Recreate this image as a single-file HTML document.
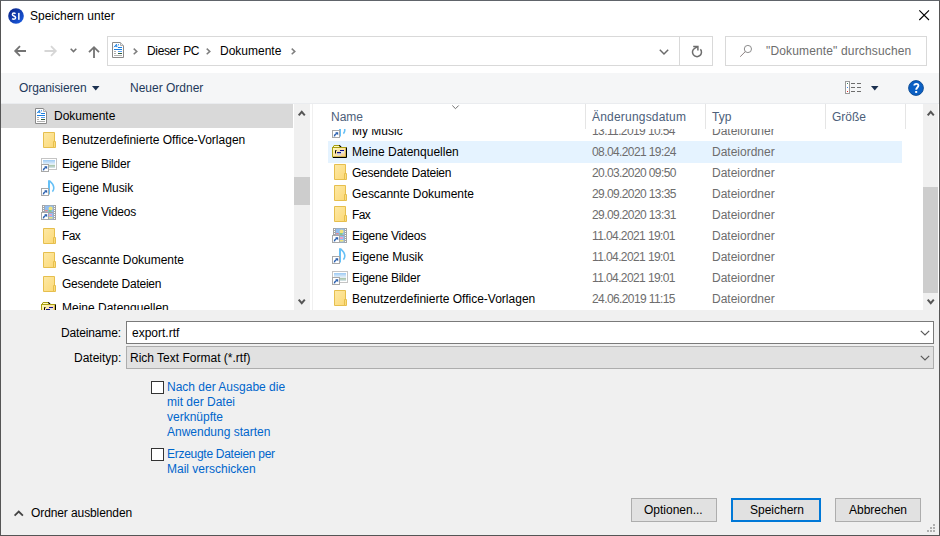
<!DOCTYPE html>
<html><head><meta charset="utf-8">
<style>
*{box-sizing:border-box;margin:0;padding:0}
html,body{width:940px;height:536px;overflow:hidden;background:#fff}
body{position:relative;font-family:"Liberation Sans",sans-serif;font-size:12px;color:#000}
.a{position:absolute}
.t{position:absolute;white-space:nowrap;line-height:14px;height:14px}
svg{position:absolute;overflow:visible}
</style></head><body>
<svg width="0" height="0" style="position:absolute;left:0;top:0"><defs>
<linearGradient id="fg" x1="0" y1="0" x2="1" y2="1"><stop offset="0" stop-color="#fde9a6"/><stop offset="1" stop-color="#fcd977"/></linearGradient>
<symbol id="i-folder" viewBox="0 0 13 16"><path d="M0.5 0.5H11.5V15.5H0.5Z" fill="url(#fg)" stroke="#e6bf4e"/><path d="M10.5 9.5H12.5V15.5H10.5Z" fill="#fcdc7c" stroke="#e6bf4e"/></symbol>
<symbol id="i-sc" viewBox="0 0 8 8"><rect x="0.5" y="0.5" width="7" height="7" fill="#fff" stroke="#a8a8a8"/><path d="M3.2 2.2H6.2V5.2Z" fill="#2a5fae"/><path d="M2.3 6.3Q2.6 4.6 4.8 3.4" stroke="#2a5fae" stroke-width="1.5" fill="none"/></symbol>
<linearGradient id="sky" x1="0" y1="0" x2="0" y2="1"><stop offset="0" stop-color="#9ccaf4"/><stop offset="0.55" stop-color="#e8f2fa"/><stop offset="0.7" stop-color="#a8c4a8"/><stop offset="1" stop-color="#d8e6f0"/></linearGradient>
<symbol id="i-pics" viewBox="0 0 16 16"><rect x="0.5" y="2.5" width="15" height="11" fill="#fff" stroke="#c4c4c4"/><rect x="2" y="4" width="12" height="8" fill="url(#sky)"/><use href="#i-sc" x="0" y="8" width="8" height="8"/></symbol>
<symbol id="i-music" viewBox="0 0 16 16"><path d="M8 0.3V14.5" stroke="#66c0f6" stroke-width="2"/><path d="M8.6 0.8C11 2.8 12.8 5 12.8 8C12.8 9.5 12.2 10.8 11.4 11.6" stroke="#66c0f6" stroke-width="1.6" fill="none"/><use href="#i-sc" x="0" y="8" width="8" height="8"/></symbol>
<symbol id="i-vid" viewBox="0 0 16 16"><rect x="1" y="1" width="14" height="15" fill="#a4a4a4"/><rect x="3.8" y="1.6" width="8.6" height="13.8" fill="#92bef0"/><rect x="3.8" y="8" width="8.6" height="1" fill="#a4a4a4"/><circle cx="9.6" cy="4.6" r="2" fill="#f2e27a"/><rect x="4.2" y="6" width="2.5" height="1.5" fill="#e88a8a"/><rect x="7.5" y="6.2" width="3" height="1.5" fill="#7ac87a"/><rect x="8" y="10" width="3" height="2" fill="#e8a0c8"/><rect x="4.5" y="13" width="7" height="1.6" fill="#f2e27a"/><g fill="#fff"><rect x="2" y="2" width="1" height="1"/><rect x="2" y="4" width="1" height="1"/><rect x="2" y="6" width="1" height="1"/><rect x="13" y="2" width="1" height="1"/><rect x="13" y="4" width="1" height="1"/><rect x="13" y="6" width="1" height="1"/><rect x="13" y="8" width="1" height="1"/><rect x="13" y="10" width="1" height="1"/><rect x="13" y="12" width="1" height="1"/><rect x="13" y="14" width="1" height="1"/></g><use href="#i-sc" x="0" y="8" width="8" height="8"/></symbol>
<linearGradient id="dg" x1="0" y1="0" x2="1" y2="1"><stop offset="0" stop-color="#fffcb8"/><stop offset="1" stop-color="#f8c890"/></linearGradient>
<symbol id="i-data" viewBox="0 0 15 13"><path d="M1 2.5L2 0.5H7.5L9 2.5" fill="#fffac0" stroke="#a89e10"/><path d="M7.3 0.3L9.2 2.4" stroke="#000" stroke-width="1.1"/><rect x="0.5" y="2.5" width="13.5" height="9.5" fill="url(#dg)" stroke="#a89e10"/><path d="M1 12.5H14.5V2.5" stroke="#000" fill="none"/><rect x="8" y="5" width="4" height="3.5" fill="#e4e4e4"/><rect x="8" y="5" width="4" height="1" fill="#10108a"/><rect x="5" y="7" width="4" height="3.5" fill="#d8d8d8"/><rect x="5" y="7" width="4" height="1.2" fill="#10108a"/><path d="M3.5 8.5V5.5H4.5" stroke="#000" fill="none"/></symbol>
<symbol id="i-doc" viewBox="0 0 12 16"><path d="M0.5 0.5H8.5L11.5 3.5V15.5H0.5Z" fill="#fff" stroke="#8a8a8a"/><path d="M8.5 0.5V3.5H11.5" fill="#e8e8e8" stroke="#b0b0b0"/><path d="M2 5.2L4.5 2.2L5 5.2M3 4.2H5" stroke="#1a7fe0" fill="none" stroke-width="0.9"/><path d="M6 2.8H7M6 5.5H10M2 7.5H10" stroke="#1a7fe0"/><path d="M2 9.5H4M2 11.5H4M2 13.5H10" stroke="#b0b0b0"/><path d="M6 9.5H10" stroke="#5ba0f0"/><path d="M6 11.5H10" stroke="#2f5a3a"/></symbol>
</defs></svg>

<!-- window frame -->
<div class="a" style="left:0;top:0;width:940px;height:536px;border:1px solid #555;border-top-color:#60646a"></div>

<!-- title bar -->
<svg style="left:8px;top:8px" width="16" height="16" viewBox="0 0 16 16">
<defs><linearGradient id="gi" x1="0" y1="0" x2="1" y2="1"><stop offset="0" stop-color="#0a1f80"/><stop offset="1" stop-color="#1a60e8"/></linearGradient></defs>
<circle cx="8" cy="8" r="7.8" fill="url(#gi)"/>
<path d="M7.5 5.7C7 5.2 6.5 5.1 5.9 5.1C4.9 5.1 4.4 5.7 4.4 6.4C4.4 8.3 7.6 7.7 7.6 9.8C7.6 10.7 6.9 11.2 5.9 11.2C5.1 11.2 4.5 11 4.1 10.7" stroke="#fff" stroke-width="1.5" fill="none"/><rect x="10.1" y="4.9" width="1.5" height="6.9" fill="#fff"/>
</svg>
<div class="t" style="left:30px;top:9px">Speichern unter</div>
<svg style="left:919px;top:10px" width="11" height="11" viewBox="0 0 11 11"><path d="M0.3 0.3L10 10M10 0.3L0.3 10" stroke="#000" stroke-width="1.1"/></svg>

<!-- nav buttons -->
<svg style="left:14px;top:45px" width="13" height="12" viewBox="0 0 13 12"><path d="M12 6H1.5M6 1.2L1.2 6L6 10.8" stroke="#737373" stroke-width="1.8" fill="none"/></svg>
<svg style="left:44px;top:45px" width="13" height="12" viewBox="0 0 13 12"><path d="M0.5 6H11.5M7 1.2L11.8 6L7 10.8" stroke="#d6d6d6" stroke-width="1.8" fill="none"/></svg>
<svg style="left:70px;top:48px" width="8" height="5" viewBox="0 0 8 5"><path d="M0.7 0.7L3.5 3.5L6.3 0.7" stroke="#737373" stroke-width="1.6" fill="none"/></svg>
<svg style="left:88px;top:46px" width="12" height="12" viewBox="0 0 12 12"><path d="M6 12V1.2M1 6.2L6 1.2L11 6.2" stroke="#737373" stroke-width="1.8" fill="none"/></svg>

<!-- address box -->
<div class="a" style="left:107px;top:36px;width:606px;height:30px;border:1px solid #d9d9d9;background:#fff"></div>
<div class="a" style="left:679px;top:37px;width:1px;height:28px;background:#d9d9d9"></div>
<svg style="left:112px;top:42px" width="12" height="16"><use href="#i-doc" width="12" height="16"/></svg>
<svg style="left:133px;top:48px" width="5" height="7" viewBox="0 0 5 7"><path d="M0.7 0.6L3.8 3.4L0.7 6.2" stroke="#7e7e7e" stroke-width="1.5" fill="none"/></svg>
<div class="t" style="left:147px;top:44px;letter-spacing:-0.35px;word-spacing:0.6px">Dieser PC</div>
<svg style="left:206px;top:48px" width="5" height="7" viewBox="0 0 5 7"><path d="M0.7 0.6L3.8 3.4L0.7 6.2" stroke="#7e7e7e" stroke-width="1.5" fill="none"/></svg>
<div class="t" style="left:220px;top:44px">Dokumente</div>
<svg style="left:291px;top:48px" width="5" height="7" viewBox="0 0 5 7"><path d="M0.7 0.6L3.8 3.4L0.7 6.2" stroke="#7e7e7e" stroke-width="1.5" fill="none"/></svg>
<svg style="left:659px;top:49px" width="10" height="6" viewBox="0 0 10 6"><path d="M0.8 0.8L5 5L9.2 0.8" stroke="#6b6b6b" stroke-width="1.5" fill="none"/></svg>
<svg style="left:686px;top:40px" width="22" height="22" viewBox="0 0 22 22"><path d="M14.4 9.2A4.5 4.5 0 1 1 8.6 8.3L11.6 6.6" stroke="#6d6d6d" stroke-width="1.5" fill="none"/><path d="M7.2 6.4H11.9V10.6" stroke="#6d6d6d" stroke-width="1.5" fill="none"/></svg>

<!-- search box -->
<div class="a" style="left:725px;top:36px;width:202px;height:30px;border:1px solid #d9d9d9;background:#fff"></div>
<svg style="left:739px;top:44px" width="14" height="14" viewBox="0 0 14 14"><circle cx="8.9" cy="5" r="3.6" stroke="#8c8c8c" stroke-width="1" fill="none"/><path d="M6.3 7.6L1.2 12.7" stroke="#8c8080" stroke-width="1"/></svg>
<div class="t" style="left:766px;top:44px;color:#6d6d6d;letter-spacing:0.15px">"Dokumente" durchsuchen</div>

<!-- toolbar -->
<div class="a" style="left:1px;top:73px;width:938px;height:31px;background:#f5f6f7"></div>
<div class="a" style="left:1px;top:103px;width:938px;height:1px;background:#eaecef"></div>
<div class="t" style="left:19px;top:81px;color:#1e395b;letter-spacing:-0.1px">Organisieren</div>
<svg style="left:92px;top:85.6px" width="7.5" height="4.5" viewBox="0 0 7.5 4.5"><path d="M0 0H7.5L3.75 4.5Z" fill="#1b3050"/></svg>
<div class="t" style="left:130px;top:81px;color:#1e395b">Neuer Ordner</div>
<svg style="left:845px;top:81px" width="17" height="13" viewBox="0 0 17 13">
<rect x="0.5" y="0.5" width="4" height="12" fill="#fff" stroke="#9a9a9a"/>
<rect x="2" y="2" width="1" height="1" fill="#3a7a5a"/><rect x="2" y="6" width="1" height="1" fill="#3a8af0"/><rect x="2" y="10" width="1" height="1" fill="#e02a2a"/>
<path d="M6 2.5H10M12 2.5H16M6 6.5H10M12 6.5H16M6 10.5H10M12 10.5H16" stroke="#6d6d6d" stroke-width="1.2"/>
</svg>
<svg style="left:870.7px;top:85.6px" width="7.5" height="4.5" viewBox="0 0 7.5 4.5"><path d="M0 0H7.5L3.75 4.5Z" fill="#1b3050"/></svg>
<svg style="left:908px;top:80px" width="16" height="16" viewBox="0 0 16 16"><circle cx="8" cy="8" r="7.4" fill="#0b60c4" stroke="#0a4890" stroke-width="0.9"/><path d="M6.3 5.6C6.3 3.4 10.4 3.2 10.4 5.6C10.4 7.4 8.2 7.6 8.2 9.8" stroke="#fff" stroke-width="1.9" fill="none"/><rect x="7.2" y="11" width="2" height="1.9" fill="#fff"/></svg>

<!-- nav pane -->
<div class="a" style="left:1px;top:104px;width:292px;height:24px;background:#d9d9d9"></div>
<div class="a" style="left:294px;top:104px;width:16px;height:206px;background:#f0f0f0"></div>
<div class="a" style="left:294px;top:177px;width:16px;height:28px;background:#cdcdcd"></div>
<svg style="left:298px;top:110px" width="8" height="6" viewBox="0 0 8 6"><path d="M0.7 5.3L3.75 1.8L6.8 5.3" stroke="#555" stroke-width="2" fill="none"/></svg>
<svg style="left:298px;top:299px" width="8" height="6" viewBox="0 0 8 6"><path d="M0.7 0.7L3.75 4.2L6.8 0.7" stroke="#555" stroke-width="2" fill="none"/></svg>

<div id="nav"></div>
<div class="a" style="left:1px;top:104px;width:292px;height:206px;overflow:hidden">
<svg style="left:34px;top:4px" width="12" height="16"><use href="#i-doc" width="12" height="16"/></svg>
<div class="t" style="left:53px;top:5px">Dokumente</div>
<svg style="left:42px;top:28px" width="13" height="16"><use href="#i-folder" width="13" height="16"/></svg>
<div class="t" style="left:61px;top:29px">Benutzerdefinierte Office-Vorlagen</div>
<svg style="left:40px;top:52px" width="16" height="16"><use href="#i-pics" width="16" height="16"/></svg>
<div class="t" style="left:61px;top:53px;letter-spacing:-0.25px">Eigene Bilder</div>
<svg style="left:40px;top:76px" width="16" height="16"><use href="#i-music" width="16" height="16"/></svg>
<div class="t" style="left:61px;top:77px;letter-spacing:-0.08px">Eigene Musik</div>
<svg style="left:40px;top:100px" width="16" height="16"><use href="#i-vid" width="16" height="16"/></svg>
<div class="t" style="left:61px;top:101px;letter-spacing:-0.25px">Eigene Videos</div>
<svg style="left:42px;top:124px" width="13" height="16"><use href="#i-folder" width="13" height="16"/></svg>
<div class="t" style="left:61px;top:125px;letter-spacing:-0.6px">Fax</div>
<svg style="left:42px;top:148px" width="13" height="16"><use href="#i-folder" width="13" height="16"/></svg>
<div class="t" style="left:61px;top:149px;letter-spacing:-0.05px">Gescannte Dokumente</div>
<svg style="left:42px;top:172px" width="13" height="16"><use href="#i-folder" width="13" height="16"/></svg>
<div class="t" style="left:61px;top:173px;letter-spacing:-0.25px">Gesendete Dateien</div>
<svg style="left:40px;top:198px" width="15" height="13"><use href="#i-data" width="15" height="13"/></svg>
<div class="t" style="left:61px;top:197px">Meine Datenquellen</div>
</div>

<!-- file list -->
<div id="list"></div>
<div class="a" style="left:310px;top:104px;width:613px;height:206px;overflow:hidden;background:#fff">
<svg style="left:22px;top:18px" width="16" height="16"><use href="#i-music" width="16" height="16"/></svg>
<div class="t" style="left:42px;top:20px">My Music</div>
<div class="t" style="left:282px;top:20px;color:#6d6d6d;letter-spacing:-0.6px">13.11.2019 10:54</div>
<div class="t" style="left:402px;top:20px;color:#6d6d6d">Dateiordner</div>
<div class="a" style="left:18px;top:37px;width:574px;height:22px;background:#e5f3ff"></div>
<svg style="left:22px;top:41px" width="15" height="13"><use href="#i-data" width="15" height="13"/></svg>
<div class="t" style="left:42px;top:41px">Meine Datenquellen</div>
<div class="t" style="left:282px;top:41px;color:#6d6d6d;letter-spacing:-0.6px">08.04.2021 19:24</div>
<div class="t" style="left:402px;top:41px;color:#6d6d6d">Dateiordner</div>
<svg style="left:24px;top:60px" width="13" height="16"><use href="#i-folder" width="13" height="16"/></svg>
<div class="t" style="left:42px;top:62px;letter-spacing:-0.25px">Gesendete Dateien</div>
<div class="t" style="left:282px;top:62px;color:#6d6d6d;letter-spacing:-0.6px">20.03.2020 09:50</div>
<div class="t" style="left:402px;top:62px;color:#6d6d6d">Dateiordner</div>
<svg style="left:24px;top:81px" width="13" height="16"><use href="#i-folder" width="13" height="16"/></svg>
<div class="t" style="left:42px;top:83px;letter-spacing:-0.05px">Gescannte Dokumente</div>
<div class="t" style="left:282px;top:83px;color:#6d6d6d;letter-spacing:-0.6px">29.09.2020 13:35</div>
<div class="t" style="left:402px;top:83px;color:#6d6d6d">Dateiordner</div>
<svg style="left:24px;top:102px" width="13" height="16"><use href="#i-folder" width="13" height="16"/></svg>
<div class="t" style="left:42px;top:104px;letter-spacing:-0.6px">Fax</div>
<div class="t" style="left:282px;top:104px;color:#6d6d6d;letter-spacing:-0.6px">29.09.2020 13:31</div>
<div class="t" style="left:402px;top:104px;color:#6d6d6d">Dateiordner</div>
<svg style="left:22px;top:123px" width="16" height="16"><use href="#i-vid" width="16" height="16"/></svg>
<div class="t" style="left:42px;top:125px;letter-spacing:-0.25px">Eigene Videos</div>
<div class="t" style="left:282px;top:125px;color:#6d6d6d;letter-spacing:-0.6px">11.04.2021 19:01</div>
<div class="t" style="left:402px;top:125px;color:#6d6d6d">Dateiordner</div>
<svg style="left:22px;top:144px" width="16" height="16"><use href="#i-music" width="16" height="16"/></svg>
<div class="t" style="left:42px;top:146px;letter-spacing:-0.08px">Eigene Musik</div>
<div class="t" style="left:282px;top:146px;color:#6d6d6d;letter-spacing:-0.6px">11.04.2021 19:01</div>
<div class="t" style="left:402px;top:146px;color:#6d6d6d">Dateiordner</div>
<svg style="left:22px;top:165px" width="16" height="16"><use href="#i-pics" width="16" height="16"/></svg>
<div class="t" style="left:42px;top:167px;letter-spacing:-0.25px">Eigene Bilder</div>
<div class="t" style="left:282px;top:167px;color:#6d6d6d;letter-spacing:-0.6px">11.04.2021 19:01</div>
<div class="t" style="left:402px;top:167px;color:#6d6d6d">Dateiordner</div>
<svg style="left:24px;top:186px" width="13" height="16"><use href="#i-folder" width="13" height="16"/></svg>
<div class="t" style="left:42px;top:188px">Benutzerdefinierte Office-Vorlagen</div>
<div class="t" style="left:282px;top:188px;color:#6d6d6d;letter-spacing:-0.6px">24.06.2019 11:15</div>
<div class="t" style="left:402px;top:188px;color:#6d6d6d">Dateiordner</div>
<div class="a" style="left:0;top:0;width:613px;height:25px;background:#fff"></div>
<svg style="left:142px;top:1px" width="8" height="5" viewBox="0 0 8 5"><path d="M0.3 0.5L3.5 3.7L6.7 0.5" stroke="#707070" fill="none"/></svg>
<div class="t" style="left:21px;top:6px;color:#4c607a">Name</div>
<div class="t" style="left:282px;top:6px;color:#4c607a;letter-spacing:0.2px">Änderungsdatum</div>
<div class="t" style="left:402px;top:6px;color:#4c607a">Typ</div>
<div class="t" style="left:522px;top:6px;color:#4c607a">Größe</div>
<div class="a" style="left:275px;top:0;width:1px;height:25px;background:#e5e5e5"></div>
<div class="a" style="left:395px;top:0;width:1px;height:25px;background:#e5e5e5"></div>
<div class="a" style="left:515px;top:0;width:1px;height:25px;background:#e5e5e5"></div>
<div class="a" style="left:595px;top:0;width:1px;height:25px;background:#e5e5e5"></div>
</div>
<div class="a" style="left:312px;top:104px;width:1px;height:206px;background:#f0f0f0"></div>
<div class="a" style="left:923px;top:104px;width:15px;height:206px;background:#f0f0f0"></div>
<div class="a" style="left:923px;top:187px;width:15px;height:106px;background:#cdcdcd"></div>
<svg style="left:927px;top:110px" width="8" height="6" viewBox="0 0 8 6"><path d="M0.7 5.3L3.75 1.8L6.8 5.3" stroke="#555" stroke-width="2" fill="none"/></svg>
<svg style="left:927px;top:299px" width="8" height="6" viewBox="0 0 8 6"><path d="M0.7 0.7L3.75 4.2L6.8 0.7" stroke="#555" stroke-width="2" fill="none"/></svg>

<!-- bottom panel -->
<div class="a" style="left:1px;top:310px;width:938px;height:225px;background:#f0f0f0"></div>
<div class="t" style="left:61px;top:326px;letter-spacing:-0.15px">Dateiname:</div>
<div class="a" style="left:126px;top:321px;width:808px;height:23px;border:1px solid #7a7a7a;background:#fff"></div>
<div class="t" style="left:132px;top:326px">export.rtf</div>
<svg style="left:920px;top:330px" width="10" height="6" viewBox="0 0 10 6"><path d="M0.8 0.8L5 5L9.2 0.8" stroke="#5a5a5a" stroke-width="1.2" fill="none"/></svg>
<div class="t" style="left:74px;top:351px">Dateityp:</div>
<div class="a" style="left:126px;top:346px;width:808px;height:23px;border:1px solid #adadad;background:#e1e1e1"></div>
<div class="t" style="left:130px;top:351px">Rich Text Format (*.rtf)</div>
<svg style="left:920px;top:355px" width="10" height="6" viewBox="0 0 10 6"><path d="M0.8 0.8L5 5L9.2 0.8" stroke="#5a5a5a" stroke-width="1.2" fill="none"/></svg>

<div class="a" style="left:151px;top:381px;width:13px;height:13px;border:1px solid #333;background:#fff"></div>
<div class="a" style="left:167px;top:380px;line-height:15px;color:#0066cc;white-space:nowrap">Nach der Ausgabe die<br>mit der Datei<br>verknüpfte<br>Anwendung starten</div>
<div class="a" style="left:151px;top:448px;width:13px;height:13px;border:1px solid #333;background:#fff"></div>
<div class="a" style="left:167px;top:447px;line-height:15px;color:#0066cc;white-space:nowrap"><span style="letter-spacing:-0.28px">Erzeugte Dateien per</span><br>Mail verschicken</div>

<svg style="left:14px;top:510px" width="10" height="7" viewBox="0 0 10 7"><path d="M0.6 5.6L4.75 1.6L8.9 5.6" stroke="#444" stroke-width="1.8" fill="none"/></svg>
<div class="t" style="left:31px;top:506px;letter-spacing:-0.1px">Ordner ausblenden</div>

<div class="a" style="left:631px;top:498px;width:86px;height:24px;border:1px solid #adadad;background:#e1e1e1"></div>
<div class="t" style="left:644px;top:503px">Optionen...</div>
<div class="a" style="left:731px;top:498px;width:90px;height:24px;border:2px solid #0078d7;background:#e1e1e1"></div>
<div class="t" style="left:750px;top:503px">Speichern</div>
<div class="a" style="left:835px;top:498px;width:86px;height:24px;border:1px solid #adadad;background:#e1e1e1"></div>
<div class="t" style="left:849px;top:503px">Abbrechen</div>

<!-- resize grip -->
<svg style="left:927px;top:524px" width="10" height="10" viewBox="0 0 10 10"><g fill="#b0b0b0"><rect x="6" y="0" width="2" height="2"/><rect x="3" y="3" width="2" height="2"/><rect x="6" y="3" width="2" height="2"/><rect x="0" y="6" width="2" height="2"/><rect x="3" y="6" width="2" height="2"/><rect x="6" y="6" width="2" height="2"/></g></svg>
</body></html>
